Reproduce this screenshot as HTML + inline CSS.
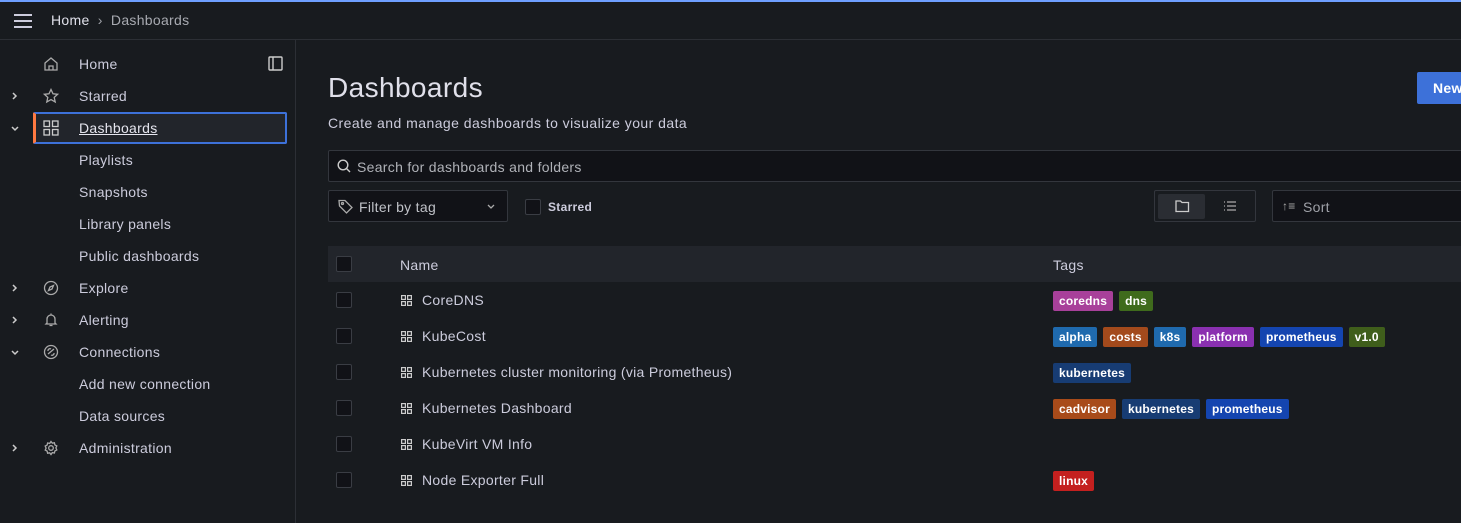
<!DOCTYPE html>
<html><head><meta charset="utf-8"><style>
*{box-sizing:border-box;margin:0;padding:0}
body{width:1461px;height:523px;overflow:hidden;background:#181b1f;font-family:"Liberation Sans",sans-serif;color:#ccccdc;position:relative;font-size:14px;letter-spacing:0.3px}
.a{position:absolute}
.top{left:0;top:0;width:1461px;height:40px;border-top:2px solid #6e9fff;border-bottom:1px solid #2c2f35;background:#181b1f}
.side{left:0;top:40px;width:296px;height:483px;border-right:1px solid #2c2f35}
.nav{position:absolute;left:0;height:32px;width:296px;line-height:32px;font-size:14px;color:#ccccdc}
.nav .t{position:absolute;left:79px}
.nav .ch{position:absolute;left:11px;top:9px}
.nav svg{position:absolute;left:43px;top:8px}
.cb{position:absolute;width:16px;height:16px;border:1px solid #3a3d44;border-radius:2px;background:#111217}
.row{position:absolute;left:328px;width:1140px;height:36px;line-height:36px;font-size:14px;color:#ccccdc}
.tag{display:inline-block;height:20px;line-height:20px;padding:0 6px;border-radius:2px;color:#fff;font-size:12px;font-weight:bold;margin-right:6px;vertical-align:middle;letter-spacing:0.2px}
.gi{position:absolute;left:73px;top:13px}
</style></head><body>
<div class="a top">
 <svg class="a" style="left:13px;top:11px" width="20" height="16" viewBox="0 0 20 16"><path d="M1 2h18M1 8h18M1 14h18" stroke="#ccccdc" stroke-width="2"/></svg>
 <div class="a" style="left:51px;top:10px;font-size:14px;color:#e0e0ea">Home <span style="color:#9fa1a8;margin:0 4px">›</span> <span style="color:#a8aab1">Dashboards</span></div>
</div>
<div class="a side">
 <div class="nav" style="top:8px"><svg width="16" height="16" viewBox="0 0 16 16" fill="none" stroke="#aaa" stroke-width="1.3"><path d="M2 7l6-5 6 5v7H2z M6 14v-4h4v4"/></svg><span class="t">Home</span>
 <svg style="left:268px" width="15" height="15" viewBox="0 0 15 15" fill="none" stroke="#ccc" stroke-width="1.4"><rect x="1" y="1" width="13" height="13" rx="1"/><path d="M5 1v13"/></svg></div>
 <div class="nav" style="top:40px"><svg class="ch" style="left:11px;top:11px" width="7" height="10" viewBox="0 0 7 10" fill="none" stroke="#ccc" stroke-width="1.5"><path d="M2 2l3 3-3 3"/></svg><svg width="16" height="16" viewBox="0 0 16 16" fill="none" stroke="#aaa" stroke-width="1.3"><path d="M8 1.5l2 4.3 4.6.5-3.4 3.1 1 4.6L8 11.6 3.8 14l1-4.6L1.4 6.3 6 5.8z"/></svg><span class="t">Starred</span></div>
 <div class="nav" style="top:72px;left:33px;width:254px;border:2px solid #3d71d9;border-left:3px solid #ff7941;border-radius:2px;background:#22252b;line-height:28px"><span class="t" style="left:43px;text-decoration:underline;color:#e6e6ef">Dashboards</span><svg style="left:7px;top:6px" width="16" height="16" viewBox="0 0 16 16" fill="none" stroke="#ccc" stroke-width="1.3"><rect x="1" y="1" width="5.5" height="5.5"/><rect x="9.5" y="1" width="5.5" height="5.5"/><rect x="1" y="9.5" width="5.5" height="5.5"/><rect x="9.5" y="9.5" width="5.5" height="5.5"/></svg></div>
 <svg class="a" style="left:10px;top:85px" width="10" height="7" viewBox="0 0 10 7" fill="none" stroke="#ccc" stroke-width="1.5"><path d="M2 2l3 3 3-3"/></svg>
 <div class="nav" style="top:104px"><span class="t">Playlists</span></div>
 <div class="nav" style="top:136px"><span class="t">Snapshots</span></div>
 <div class="nav" style="top:168px"><span class="t">Library panels</span></div>
 <div class="nav" style="top:200px"><span class="t">Public dashboards</span></div>
 <div class="nav" style="top:232px"><svg class="ch" style="left:11px;top:11px" width="7" height="10" viewBox="0 0 7 10" fill="none" stroke="#ccc" stroke-width="1.5"><path d="M2 2l3 3-3 3"/></svg><svg width="16" height="16" viewBox="0 0 16 16" fill="none" stroke="#aaa" stroke-width="1.3"><circle cx="8" cy="8" r="6.5"/><path d="M10.5 5.5l-1.5 3.5-3.5 1.5 1.5-3.5z"/></svg><span class="t">Explore</span></div>
 <div class="nav" style="top:264px"><svg class="ch" style="left:11px;top:11px" width="7" height="10" viewBox="0 0 7 10" fill="none" stroke="#ccc" stroke-width="1.5"><path d="M2 2l3 3-3 3"/></svg><svg width="16" height="16" viewBox="0 0 16 16" fill="none" stroke="#aaa" stroke-width="1.3"><path d="M4 11V7a4 4 0 018 0v4l1 1H3z M6.5 13.5h3 M8 1.5v1.5"/></svg><span class="t">Alerting</span></div>
 <div class="nav" style="top:296px"><svg class="ch" style="left:10px;top:13px" width="10" height="7" viewBox="0 0 10 7" fill="none" stroke="#ccc" stroke-width="1.5"><path d="M2 2l3 3 3-3"/></svg><svg width="16" height="16" viewBox="0 0 16 16" fill="none" stroke="#aaa" stroke-width="1.3"><circle cx="8" cy="8" r="6.5"/><path d="M5 10l6-5 M5 7a2 2 0 013-2 M11 9a2 2 0 01-3 2"/></svg><span class="t">Connections</span></div>
 <div class="nav" style="top:328px"><span class="t">Add new connection</span></div>
 <div class="nav" style="top:360px"><span class="t">Data sources</span></div>
 <div class="nav" style="top:392px"><svg class="ch" style="left:11px;top:11px" width="7" height="10" viewBox="0 0 7 10" fill="none" stroke="#ccc" stroke-width="1.5"><path d="M2 2l3 3-3 3"/></svg><svg width="16" height="16" viewBox="0 0 16 16" fill="none" stroke="#aaa" stroke-width="1.3"><circle cx="8" cy="8" r="2.3"/><path d="M8 1.5l1.3 1.7 2.1-.4.5 2.1 1.9 1-.9 2 .9 2-1.9 1-.5 2.1-2.1-.4L8 14.5l-1.3-1.7-2.1.4-.5-2.1-1.9-1 .9-2-.9-2 1.9-1 .5-2.1 2.1.4z"/></svg><span class="t">Administration</span></div>
</div>

<div class="a" style="left:328px;top:72px;font-size:28px;color:#e0e0ea;letter-spacing:0.4px">Dashboards</div>
<div class="a" style="left:328px;top:115px;font-size:14px;color:#ccccdc;letter-spacing:0.45px">Create and manage dashboards to visualize your data</div>
<div class="a" style="left:1417px;top:72px;width:60px;height:32px;background:#3d71d9;border-radius:2px;color:#fff;font-weight:bold;line-height:32px;padding-left:16px;font-size:14px">New</div>

<div class="a" style="left:328px;top:150px;width:1140px;height:32px;background:#111217;border:1px solid #33363d;border-radius:2px">
 <svg class="a" style="left:8px;top:8px" width="14" height="14" viewBox="0 0 14 14" fill="none" stroke="#ccc" stroke-width="1.4"><circle cx="6" cy="6" r="4.8"/><path d="M9.5 9.5l3.5 3.5"/></svg>
 <div class="a" style="left:28px;top:8px;color:#b0b2b8">Search for dashboards and folders</div>
</div>
<div class="a" style="left:328px;top:190px;width:180px;height:32px;border:1px solid #33363d;border-radius:2px;background:#111217">
 <svg class="a" style="left:9px;top:8px" width="15" height="15" viewBox="0 0 15 15" fill="none" stroke="#aaa" stroke-width="1.3"><path d="M1 1.5h6l7 7-5.5 5.5-7-7z"/><circle cx="4.5" cy="4.5" r="1"/></svg>
 <div class="a" style="left:30px;top:8px;color:#c0c2c8">Filter by tag</div>
 <svg class="a" style="left:157px;top:12px" width="10" height="7" viewBox="0 0 10 7" fill="none" stroke="#aaa" stroke-width="1.3"><path d="M2 2l3 3 3-3"/></svg>
</div>
<div class="cb" style="left:525px;top:199px"></div>
<div class="a" style="left:548px;top:200px;font-size:12px;font-weight:bold;color:#ccccdc">Starred</div>
<div class="a" style="left:1154px;top:190px;width:102px;height:32px;border:1px solid #33363d;border-radius:2px">
 <div class="a" style="left:3px;top:3px;width:47px;height:25px;background:#2a2d33;border-radius:2px"></div>
 <svg class="a" style="left:20px;top:8px" width="15" height="14" viewBox="0 0 15 14" fill="none" stroke="#ccc" stroke-width="1.3"><path d="M1 2h4.5l1.5 1.5h6.5V12.5H1z"/></svg>
 <svg class="a" style="left:68px;top:9px" width="14" height="12" viewBox="0 0 14 12" stroke="#aaa" stroke-width="1.3"><path d="M1 2h1M4 2h9M1 6h1M4 6h9M1 10h1M4 10h9"/></svg>
</div>
<div class="a" style="left:1272px;top:190px;width:200px;height:32px;border:1px solid #33363d;border-radius:2px;background:#111217">
 <div class="a" style="left:9px;top:8px;color:#aaa;font-size:12px">↑≡</div>
 <div class="a" style="left:30px;top:8px;color:#9fa1a8">Sort</div>
</div>

<div class="a" style="left:328px;top:246px;width:1140px;height:36px;background:#22252b"></div>
<div class="cb" style="left:336px;top:256px"></div>
<div class="a" style="left:400px;top:257px;color:#ccccdc">Name</div>
<div class="a" style="left:1053px;top:257px;color:#ccccdc">Tags</div>

<div class="row" style="top:282px"><div class="cb" style="left:8px;top:10px"></div><svg class="gi" width="11" height="11" viewBox="0 0 11 11" fill="none" stroke="#ccc" stroke-width="1.2"><rect x=".6" y=".6" width="3.8" height="3.8"/><rect x="6.6" y=".6" width="3.8" height="3.8"/><rect x=".6" y="6.6" width="3.8" height="3.8"/><rect x="6.6" y="6.6" width="3.8" height="3.8"/></svg><span class="a" style="left:94px">CoreDNS</span><span class="a" style="left:725px"><span class="tag" style="background:#a8409a">coredns</span><span class="tag" style="background:#3f6b1c">dns</span></span></div>
<div class="row" style="top:318px"><div class="cb" style="left:8px;top:10px"></div><svg class="gi" width="11" height="11" viewBox="0 0 11 11" fill="none" stroke="#ccc" stroke-width="1.2"><rect x=".6" y=".6" width="3.8" height="3.8"/><rect x="6.6" y=".6" width="3.8" height="3.8"/><rect x=".6" y="6.6" width="3.8" height="3.8"/><rect x="6.6" y="6.6" width="3.8" height="3.8"/></svg><span class="a" style="left:94px">KubeCost</span><span class="a" style="left:725px"><span class="tag" style="background:#1f6aae">alpha</span><span class="tag" style="background:#a34a1c">costs</span><span class="tag" style="background:#1f6aae">k8s</span><span class="tag" style="background:#8a30b0">platform</span><span class="tag" style="background:#1445b0">prometheus</span><span class="tag" style="background:#3f5e1b">v1.0</span></span></div>
<div class="row" style="top:354px"><div class="cb" style="left:8px;top:10px"></div><svg class="gi" width="11" height="11" viewBox="0 0 11 11" fill="none" stroke="#ccc" stroke-width="1.2"><rect x=".6" y=".6" width="3.8" height="3.8"/><rect x="6.6" y=".6" width="3.8" height="3.8"/><rect x=".6" y="6.6" width="3.8" height="3.8"/><rect x="6.6" y="6.6" width="3.8" height="3.8"/></svg><span class="a" style="left:94px">Kubernetes cluster monitoring (via Prometheus)</span><span class="a" style="left:725px"><span class="tag" style="background:#173c73">kubernetes</span></span></div>
<div class="row" style="top:390px"><div class="cb" style="left:8px;top:10px"></div><svg class="gi" width="11" height="11" viewBox="0 0 11 11" fill="none" stroke="#ccc" stroke-width="1.2"><rect x=".6" y=".6" width="3.8" height="3.8"/><rect x="6.6" y=".6" width="3.8" height="3.8"/><rect x=".6" y="6.6" width="3.8" height="3.8"/><rect x="6.6" y="6.6" width="3.8" height="3.8"/></svg><span class="a" style="left:94px">Kubernetes Dashboard</span><span class="a" style="left:725px"><span class="tag" style="background:#a84b1a">cadvisor</span><span class="tag" style="background:#173c73">kubernetes</span><span class="tag" style="background:#1445b0">prometheus</span></span></div>
<div class="row" style="top:426px"><div class="cb" style="left:8px;top:10px"></div><svg class="gi" width="11" height="11" viewBox="0 0 11 11" fill="none" stroke="#ccc" stroke-width="1.2"><rect x=".6" y=".6" width="3.8" height="3.8"/><rect x="6.6" y=".6" width="3.8" height="3.8"/><rect x=".6" y="6.6" width="3.8" height="3.8"/><rect x="6.6" y="6.6" width="3.8" height="3.8"/></svg><span class="a" style="left:94px">KubeVirt VM Info</span></div>
<div class="row" style="top:462px"><div class="cb" style="left:8px;top:10px"></div><svg class="gi" width="11" height="11" viewBox="0 0 11 11" fill="none" stroke="#ccc" stroke-width="1.2"><rect x=".6" y=".6" width="3.8" height="3.8"/><rect x="6.6" y=".6" width="3.8" height="3.8"/><rect x=".6" y="6.6" width="3.8" height="3.8"/><rect x="6.6" y="6.6" width="3.8" height="3.8"/></svg><span class="a" style="left:94px">Node Exporter Full</span><span class="a" style="left:725px"><span class="tag" style="background:#c4201f">linux</span></span></div>
</body></html>
